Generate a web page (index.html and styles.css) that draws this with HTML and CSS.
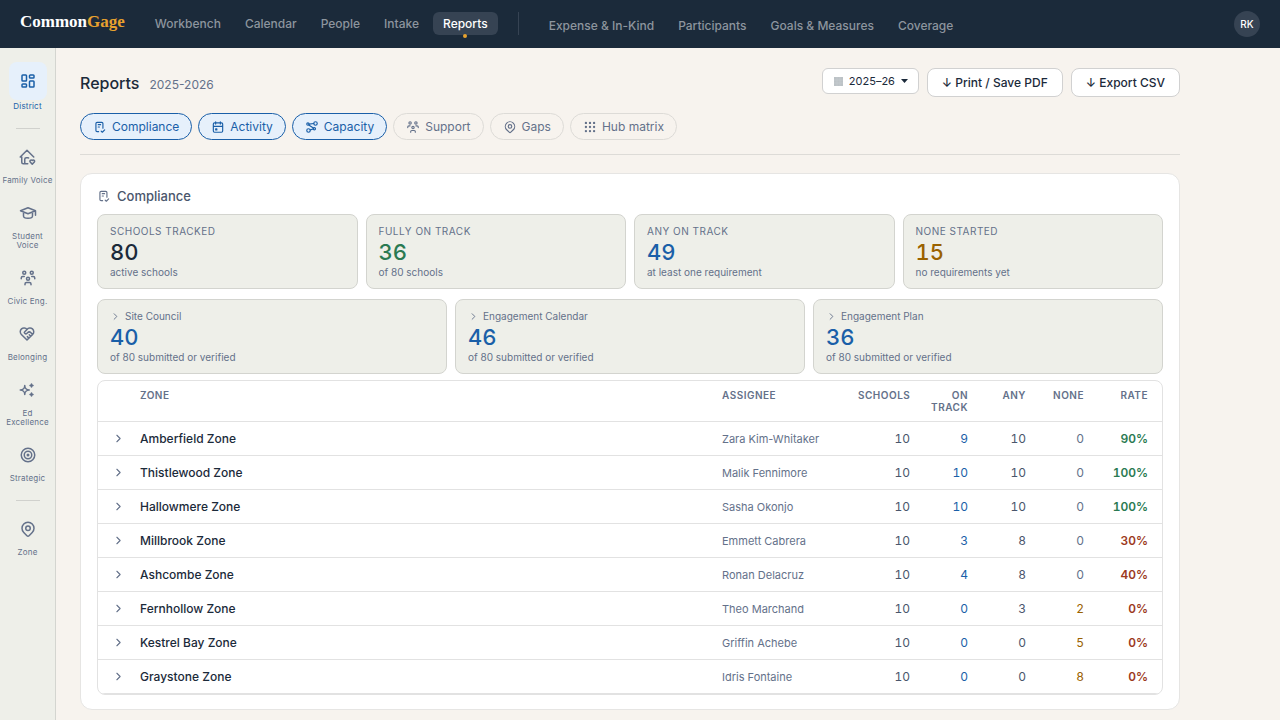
FILE: index.html
```html
<!DOCTYPE html>
<html lang="en">
<head>
<meta charset="utf-8">
<title>CommonGage – Reports</title>
<link rel="stylesheet" href="styles.css">
</head>
<body>
<svg class="sprite" aria-hidden="true">
  <symbol id="i-dashboard" viewBox="0 0 24 24"><path d="M5 4h4a1 1 0 0 1 1 1v6a1 1 0 0 1 -1 1h-4a1 1 0 0 1 -1 -1v-6a1 1 0 0 1 1 -1M5 16h4a1 1 0 0 1 1 1v2a1 1 0 0 1 -1 1h-4a1 1 0 0 1 -1 -1v-2a1 1 0 0 1 1 -1M15 12h4a1 1 0 0 1 1 1v6a1 1 0 0 1 -1 1h-4a1 1 0 0 1 -1 -1v-6a1 1 0 0 1 1 -1M15 4h4a1 1 0 0 1 1 1v2a1 1 0 0 1 -1 1h-4a1 1 0 0 1 -1 -1v-2a1 1 0 0 1 1 -1"/></symbol>
  <symbol id="i-home" viewBox="0 0 24 24"><path d="M21 12l-9 -9l-9 9h2v7a2 2 0 0 0 2 2h6M9 21v-6a2 2 0 0 1 2 -2h2c.39 0 .754 .112 1.061 .304M19 21.5l2.518 -2.58a1.74 1.74 0 0 0 0 -2.413a1.627 1.627 0 0 0 -2.346 0l-.168 .172l-.168 -.172a1.627 1.627 0 0 0 -2.346 0a1.74 1.74 0 0 0 0 2.412l2.51 2.59z"/></symbol>
  <symbol id="i-school" viewBox="0 0 24 24"><path d="M22 9l-10 -4l-10 4l10 4l10 -4v6M6 10.6v5.4c0 1.657 2.686 3 6 3s6 -1.343 6 -3v-5.4"/></symbol>
  <symbol id="i-group" viewBox="0 0 24 24"><path d="M10 13a2 2 0 1 0 4 0a2 2 0 0 0 -4 0M8 21v-1a2 2 0 0 1 2 -2h4a2 2 0 0 1 2 2v1M15 5a2 2 0 1 0 4 0a2 2 0 0 0 -4 0M17 10h2a2 2 0 0 1 2 2v1M5 5a2 2 0 1 0 4 0a2 2 0 0 0 -4 0M3 13v-1a2 2 0 0 1 2 -2h2"/></symbol>
  <symbol id="i-heart" viewBox="0 0 24 24"><path d="M19.5 12.572l-7.5 7.428l-7.5 -7.428a5 5 0 1 1 7.5 -6.566a5 5 0 1 1 7.5 6.572M12 6l-3.293 3.293a1 1 0 0 0 0 1.414l.543 .543c.69 .69 1.81 .69 2.5 0l1 -1a3.182 3.182 0 0 1 4.5 0l2.25 2.25M12.5 15.5l2 2M15 13l2 2"/></symbol>
  <symbol id="i-sparkles" viewBox="0 0 24 24"><path d="M16 18a2 2 0 0 1 2 2a2 2 0 0 1 2 -2a2 2 0 0 1 -2 -2a2 2 0 0 1 -2 2zm0 -12a2 2 0 0 1 2 2a2 2 0 0 1 2 -2a2 2 0 0 1 -2 -2a2 2 0 0 1 -2 2zm-7 12a6 6 0 0 1 6 -6a6 6 0 0 1 -6 -6a6 6 0 0 1 -6 6a6 6 0 0 1 6 6z"/></symbol>
  <symbol id="i-target" viewBox="0 0 24 24"><circle cx="12" cy="12" r="1"/><circle cx="12" cy="12" r="5"/><circle cx="12" cy="12" r="9"/></symbol>
  <symbol id="i-pin" viewBox="0 0 24 24"><path d="M9 11a3 3 0 1 0 6 0a3 3 0 0 0 -6 0M17.657 16.657l-4.243 4.243a2 2 0 0 1 -2.827 0l-4.244 -4.243a8 8 0 1 1 11.314 0z"/></symbol>
  <symbol id="i-checklist" viewBox="0 0 24 24"><path d="M9.615 20h-2.615a2 2 0 0 1 -2 -2v-12a2 2 0 0 1 2 -2h8a2 2 0 0 1 2 2v8M14 19l2 2l4 -4M9 8h4M9 12h2"/></symbol>
  <symbol id="i-calendar" viewBox="0 0 24 24"><path d="M4 7a2 2 0 0 1 2 -2h12a2 2 0 0 1 2 2v12a2 2 0 0 1 -2 2h-12a2 2 0 0 1 -2 -2zM16 3v4M8 3v4M4 11h16M8 15h2v2h-2z"/></symbol>
  <symbol id="i-network" viewBox="0 0 24 24"><circle cx="5" cy="7" r="2"/><circle cx="16" cy="15" r="2"/><circle cx="18" cy="6" r="3"/><circle cx="6" cy="18" r="3"/><path d="M9 17l5 -1.5M6.5 8.5l7.81 5.37M7 7l8 -1"/></symbol>
  <symbol id="i-grid" viewBox="0 0 24 24"><circle cx="5" cy="5" r="1"/><circle cx="12" cy="5" r="1"/><circle cx="19" cy="5" r="1"/><circle cx="5" cy="12" r="1"/><circle cx="12" cy="12" r="1"/><circle cx="19" cy="12" r="1"/><circle cx="5" cy="19" r="1"/><circle cx="12" cy="19" r="1"/><circle cx="19" cy="19" r="1"/></symbol>
  <symbol id="i-chevron" viewBox="0 0 24 24"><path d="M9 6l6 6l-6 6"/></symbol>
</svg>

<header class="topbar">
  <a class="brand" href="#">Common<span class="brand-accent">Gage</span></a>
  <nav class="nav" aria-label="Main">
    <a class="nav-link" href="#">Workbench</a>
    <a class="nav-link" href="#">Calendar</a>
    <a class="nav-link" href="#">People</a>
    <a class="nav-link" href="#">Intake</a>
    <a class="nav-link nav-link-active" href="#" aria-current="page">Reports</a>
  </nav>
  <nav class="nav nav-secondary" aria-label="More">
    <a class="nav-link" href="#">Expense &amp; In-Kind</a>
    <a class="nav-link" href="#">Participants</a>
    <a class="nav-link" href="#">Goals &amp; Measures</a>
    <a class="nav-link" href="#">Coverage</a>
  </nav>
  <button class="avatar" type="button">RK</button>
</header>

<div class="shell">
  <aside class="rail">
    <a class="rail-item rail-item-active" href="#"><span class="rail-icon"><svg class="icon"><use href="#i-dashboard"/></svg></span>District</a>
    <hr class="rail-rule">
    <a class="rail-item" href="#"><span class="rail-icon"><svg class="icon"><use href="#i-home"/></svg></span>Family Voice</a>
    <a class="rail-item" href="#"><span class="rail-icon"><svg class="icon"><use href="#i-school"/></svg></span>Student<br>Voice</a>
    <a class="rail-item" href="#"><span class="rail-icon"><svg class="icon"><use href="#i-group"/></svg></span>Civic Eng.</a>
    <a class="rail-item" href="#"><span class="rail-icon"><svg class="icon"><use href="#i-heart"/></svg></span>Belonging</a>
    <a class="rail-item" href="#"><span class="rail-icon"><svg class="icon"><use href="#i-sparkles"/></svg></span>Ed<br>Excellence</a>
    <a class="rail-item" href="#"><span class="rail-icon"><svg class="icon"><use href="#i-target"/></svg></span>Strategic</a>
    <hr class="rail-rule">
    <a class="rail-item" href="#"><span class="rail-icon"><svg class="icon"><use href="#i-pin"/></svg></span>Zone</a>
  </aside>

  <main class="main">
    <div class="page-head">
      <h1 class="page-title">Reports</h1>
      <span class="page-year">2025-2026</span>
      <div class="actions">
        <label class="year-picker">
          <svg class="year-icon" viewBox="0 0 9 9" aria-hidden="true"><rect class="year-fill" width="9" height="9"/><path class="year-lines" d="M0 3h9M0 6h9M3 0v9M6 0v9"/></svg>
          <select class="year-select" aria-label="School year"><option>2025–26</option></select>
          <svg class="caret" viewBox="0 0 7 4" aria-hidden="true"><path d="M0 0h7L3.500 4z"/></svg>
        </label>
        <button class="btn" type="button">↓ Print / Save PDF</button>
        <button class="btn" type="button">↓ Export CSV</button>
      </div>
    </div>

    <div class="chips">
      <button class="chip chip-on" type="button" aria-pressed="true"><svg class="icon icon-sm"><use href="#i-checklist"/></svg>Compliance</button>
      <button class="chip chip-on" type="button" aria-pressed="true"><svg class="icon icon-sm"><use href="#i-calendar"/></svg>Activity</button>
      <button class="chip chip-on" type="button" aria-pressed="true"><svg class="icon icon-sm"><use href="#i-network"/></svg>Capacity</button>
      <button class="chip" type="button" aria-pressed="false"><svg class="icon icon-sm"><use href="#i-group"/></svg>Support</button>
      <button class="chip" type="button" aria-pressed="false"><svg class="icon icon-sm"><use href="#i-pin"/></svg>Gaps</button>
      <button class="chip" type="button" aria-pressed="false"><svg class="icon icon-sm"><use href="#i-grid"/></svg>Hub matrix</button>
    </div>

    <section class="card">
      <h2 class="card-title"><svg class="icon icon-sm"><use href="#i-checklist"/></svg>Compliance</h2>

      <div class="stats stats-four">
        <div class="stat"><div class="stat-label stat-caps">Schools tracked</div><div class="stat-value">80</div><div class="stat-note">active schools</div></div>
        <div class="stat"><div class="stat-label stat-caps">Fully on track</div><div class="stat-value green">36</div><div class="stat-note">of 80 schools</div></div>
        <div class="stat"><div class="stat-label stat-caps">Any on track</div><div class="stat-value blue">49</div><div class="stat-note">at least one requirement</div></div>
        <div class="stat"><div class="stat-label stat-caps">None started</div><div class="stat-value amber">15</div><div class="stat-note">no requirements yet</div></div>
      </div>

      <div class="stats stats-three">
        <div class="stat"><div class="stat-label"><svg class="icon icon-xs"><use href="#i-chevron"/></svg>Site Council</div><div class="stat-value blue">40</div><div class="stat-note">of 80 submitted or verified</div></div>
        <div class="stat"><div class="stat-label"><svg class="icon icon-xs"><use href="#i-chevron"/></svg>Engagement Calendar</div><div class="stat-value blue">46</div><div class="stat-note">of 80 submitted or verified</div></div>
        <div class="stat"><div class="stat-label"><svg class="icon icon-xs"><use href="#i-chevron"/></svg>Engagement Plan</div><div class="stat-value blue">36</div><div class="stat-note">of 80 submitted or verified</div></div>
      </div>

      <div class="table-wrap">
        <table class="zones">
          <colgroup><col class="c-toggle"><col><col class="c-person"><col class="c-schools"><col class="c-num"><col class="c-num"><col class="c-num"><col class="c-rate"></colgroup>
          <thead>
            <tr><th></th><th>Zone</th><th>Assignee</th><th class="num">Schools</th><th class="num">On track</th><th class="num">Any</th><th class="num">None</th><th class="num">Rate</th></tr>
          </thead>
          <tbody>
            <tr><td><button class="toggle" type="button" aria-label="Expand Amberfield Zone"><svg class="icon icon-row"><use href="#i-chevron"/></svg></button></td><td class="zone">Amberfield Zone</td><td class="person">Zara Kim-Whitaker</td><td class="num">10</td><td class="num blue">9</td><td class="num">10</td><td class="num muted">0</td><td class="num rate green">90%</td></tr>
            <tr><td><button class="toggle" type="button" aria-label="Expand Thistlewood Zone"><svg class="icon icon-row"><use href="#i-chevron"/></svg></button></td><td class="zone">Thistlewood Zone</td><td class="person">Malik Fennimore</td><td class="num">10</td><td class="num blue">10</td><td class="num">10</td><td class="num muted">0</td><td class="num rate green">100%</td></tr>
            <tr><td><button class="toggle" type="button" aria-label="Expand Hallowmere Zone"><svg class="icon icon-row"><use href="#i-chevron"/></svg></button></td><td class="zone">Hallowmere Zone</td><td class="person">Sasha Okonjo</td><td class="num">10</td><td class="num blue">10</td><td class="num">10</td><td class="num muted">0</td><td class="num rate green">100%</td></tr>
            <tr><td><button class="toggle" type="button" aria-label="Expand Millbrook Zone"><svg class="icon icon-row"><use href="#i-chevron"/></svg></button></td><td class="zone">Millbrook Zone</td><td class="person">Emmett Cabrera</td><td class="num">10</td><td class="num blue">3</td><td class="num">8</td><td class="num muted">0</td><td class="num rate red">30%</td></tr>
            <tr><td><button class="toggle" type="button" aria-label="Expand Ashcombe Zone"><svg class="icon icon-row"><use href="#i-chevron"/></svg></button></td><td class="zone">Ashcombe Zone</td><td class="person">Ronan Delacruz</td><td class="num">10</td><td class="num blue">4</td><td class="num">8</td><td class="num muted">0</td><td class="num rate red">40%</td></tr>
            <tr><td><button class="toggle" type="button" aria-label="Expand Fernhollow Zone"><svg class="icon icon-row"><use href="#i-chevron"/></svg></button></td><td class="zone">Fernhollow Zone</td><td class="person">Theo Marchand</td><td class="num">10</td><td class="num blue">0</td><td class="num">3</td><td class="num amber">2</td><td class="num rate red">0%</td></tr>
            <tr><td><button class="toggle" type="button" aria-label="Expand Kestrel Bay Zone"><svg class="icon icon-row"><use href="#i-chevron"/></svg></button></td><td class="zone">Kestrel Bay Zone</td><td class="person">Griffin Achebe</td><td class="num">10</td><td class="num blue">0</td><td class="num">0</td><td class="num amber">5</td><td class="num rate red">0%</td></tr>
            <tr><td><button class="toggle" type="button" aria-label="Expand Graystone Zone"><svg class="icon icon-row"><use href="#i-chevron"/></svg></button></td><td class="zone">Graystone Zone</td><td class="person">Idris Fontaine</td><td class="num">10</td><td class="num blue">0</td><td class="num">0</td><td class="num amber">8</td><td class="num rate red">0%</td></tr>
          </tbody>
        </table>
      </div>
    </section>
  </main>
</div>
</body>
</html>
```

FILE: styles.css
```css
:root {
  --navy: #1b2a3a;
  --cream: #f7f3ee;
  --sage: #eeefe9;
  --slate: #64718a;
  --ink: #4a566c;
  --blue: #1a5fa8;
  --green: #2a7a52;
  --amber: #9a6200;
  --red: #9c3a1e;
  --sky: #e6f0fb;
  --line: #dddbd7;
  --hair: #e2e2e2;
}

* { box-sizing: border-box; }

body {
  margin: 0;
  min-height: 100vh;
  display: flex;
  flex-direction: column;
  background: var(--cream);
  color: var(--navy);
  font: 12px/15px Inter, "Liberation Sans", sans-serif;
}

a { color: inherit; text-decoration: none; }
button, select { font: inherit; color: inherit; }
button { cursor: pointer; }
h1, h2 { margin: 0; font-weight: 500; }

.sprite { display: none; }

.icon {
  width: 18px;
  height: 18px;
  flex: none;
  fill: none;
  stroke: currentColor;
  stroke-width: 2;
  stroke-linecap: round;
  stroke-linejoin: round;
}
.icon-sm { width: 14px; height: 14px; }
.icon-row { width: 13px; height: 13px; }
.icon-xs { width: 11px; height: 11px; }

/* Top bar */
.topbar {
  height: 48px;
  flex: none;
  display: flex;
  align-items: center;
  padding: 0 20px;
  background: var(--navy);
}
.brand {
  margin: 0 20px 4px 0;
  color: #fff;
  font: bold 17px/20px "Liberation Serif", serif;
}
.brand-accent { color: #e8a22e; }
.nav { display: flex; gap: 4px; margin-bottom: 1px; }
.nav-link {
  position: relative;
  padding: 4px 10px;
  border-radius: 6px;
  color: #8d959e;
  font-weight: 500;
}
.nav-link-active { background: #364353; color: #fff; }
.nav-link-active::after {
  content: "";
  position: absolute;
  left: 50%;
  bottom: -3px;
  width: 4px;
  height: 4px;
  margin-left: -2px;
  border-radius: 50%;
  background: #e8a22e;
}
.nav-secondary {
  margin-left: 20px;
  padding: 2px 0 0 20px;
  border-left: 1px solid #364353;
}
.nav-secondary .nav-link { padding-bottom: 2px; }
.avatar {
  width: 26px;
  height: 26px;
  margin-left: auto;
  padding: 0;
  border: 0;
  border-radius: 50%;
  background: #364353;
  color: #fff;
  font-size: 10px;
  font-weight: 500;
}

/* Side rail */
.shell { flex: 1; display: flex; }
.rail {
  width: 56px;
  flex: none;
  display: flex;
  flex-direction: column;
  align-items: center;
  gap: 11px;
  padding-top: 14px;
  border-right: 1px solid #d4d5d0;
  background: var(--sage);
}
.rail-item {
  display: flex;
  flex-direction: column;
  align-items: center;
  color: var(--slate);
  font-size: 8px;
  line-height: 9px;
  letter-spacing: 0.2px;
  text-align: center;
  white-space: nowrap;
}
.rail-item-active { color: var(--blue); }
.rail-icon {
  width: 38px;
  height: 34px;
  margin-bottom: 2px;
  display: flex;
  align-items: center;
  justify-content: center;
  border-radius: 8px;
}
.rail-item-active .rail-icon { height: 38px; background: var(--sky); }
.rail-rule {
  width: 24px;
  margin: 6px 0 0;
  border: 0;
  border-top: 1px solid #d0d1cd;
}

/* Page */
.main {
  flex: 1;
  min-width: 0;
  max-width: 1148px;
  padding: 20px 24px 10px;
}
.page-head {
  display: flex;
  align-items: center;
  gap: 10px;
  margin-bottom: 16px;
}
.page-title { font-size: 16px; line-height: 20px; }
.page-year { color: var(--slate); padding-top: 3px; }
.actions {
  margin-left: auto;
  display: flex;
  align-items: flex-start;
  gap: 8px;
}
.year-picker {
  display: flex;
  align-items: center;
  height: 26px;
  padding: 0 10px 0 11px;
  border: 1px solid #d1d1d1;
  border-radius: 6px;
  background: #fff;
  font-size: 11px;
}
.year-icon { width: 9px; height: 9px; margin-right: 6px; }
.year-fill { fill: #bcc2c6; }
.year-lines { stroke: #c8cdd0; stroke-width: 0.500; fill: none; }
.year-select {
  appearance: none;
  padding: 0;
  border: 0;
  background: none;
}
.caret { width: 7px; height: 4px; margin-left: 5px; fill: var(--navy); }
.btn {
  padding: 6px 14px;
  border: 1px solid #d1d1d1;
  border-radius: 8px;
  background: #fff;
  font-weight: 500;
}

.chips {
  display: flex;
  flex-wrap: wrap;
  gap: 6px;
  padding-bottom: 14px;
  border-bottom: 1px solid var(--line);
}
.chip {
  display: flex;
  align-items: center;
  gap: 5px;
  padding: 5px 12px;
  border: 1px solid var(--line);
  border-radius: 14px;
  background: none;
  color: var(--slate);
}
.chip-on { border-color: var(--blue); background: var(--sky); color: var(--blue); }

.card {
  margin-top: 18px;
  padding: 14px 16px;
  border: 1px solid #e6e5e3;
  border-radius: 12px;
  background: #fff;
}
.card-title {
  display: flex;
  align-items: center;
  gap: 6px;
  margin-bottom: 10px;
  color: var(--ink);
  font-size: 13px;
  line-height: 16px;
}
.card-title .icon { color: var(--slate); }

.stats { display: grid; gap: 8px; }
.stats-four { grid-template-columns: repeat(4, 1fr); margin-bottom: 10px; }
.stats-three { grid-template-columns: repeat(3, 1fr); margin-bottom: 6px; }
.stat {
  padding: 10px 12px;
  border: 1px solid #d3d4cf;
  border-radius: 8px;
  background: var(--sage);
  font-size: 10px;
  line-height: 12px;
}
.stat-label { display: flex; align-items: center; gap: 4px; color: var(--slate); }
.stat-caps { text-transform: uppercase; letter-spacing: 0.5px; }
.stat-value {
  padding-top: 2px;
  font-size: 22px;
  line-height: 27px;
  font-weight: 500;
  font-variant-numeric: tabular-nums;
}
.stat-note { color: var(--slate); }

.table-wrap { border: 1px solid var(--hair); border-radius: 8px; overflow: hidden; }
.zones {
  width: 100%;
  table-layout: fixed;
  border-collapse: separate;
  border-spacing: 0;
}
.c-toggle { width: 32px; }
.c-person { width: 136px; }
.c-schools { width: 72px; }
.c-num { width: 58px; }
.c-rate { width: 68px; }
.zones th, .zones td { border-bottom: 1px solid var(--hair); text-align: left; }
.zones th {
  padding: 8px 10px;
  vertical-align: top;
  color: var(--slate);
  font-size: 10px;
  line-height: 12px;
  font-weight: 600;
  letter-spacing: 0.5px;
  text-transform: uppercase;
}
.zones td { padding: 9px 10px; color: var(--ink); }
.zones .num { text-align: right; font-variant-numeric: tabular-nums; }
.zones .num:last-child { padding-right: 14px; }
.zones .zone { color: var(--navy); font-weight: 500; }
.zones .person { padding: 10px 10px 8px; color: var(--slate); font-size: 11px; }
.zones .muted { color: var(--slate); }
.zones .rate { font-weight: 600; }
.zones td:first-child { padding: 0 0 0 14px; }
.toggle {
  display: flex;
  padding: 0;
  border: 0;
  background: none;
  color: var(--slate);
}

/* Value colours, shared by stats and table */
.stat-value.blue, .zones .blue { color: var(--blue); }
.stat-value.green, .zones .green { color: var(--green); }
.stat-value.amber, .zones .amber { color: var(--amber); }
.zones .red { color: var(--red); }
```
